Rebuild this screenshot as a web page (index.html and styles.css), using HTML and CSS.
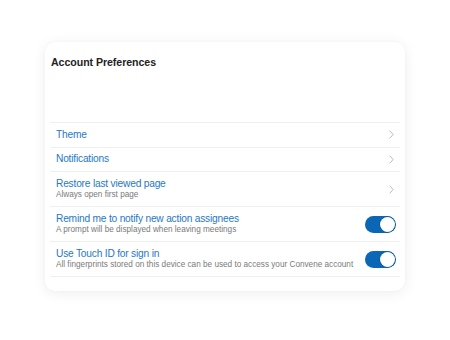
FILE: index.html
```html
<!DOCTYPE html>
<html>
<head>
<meta charset="utf-8">
<link rel="stylesheet" href="styles.css">
</head>
<body>
<div class="card">
  <div class="title">Account Preferences</div>
  <div class="list">
    <div class="row short">
      <div class="text"><div class="label">Theme</div></div>
      <svg class="chev" width="5" height="9" viewBox="0 0 5 9"><path d="M0.7 0.7 L4.2 4.5 L0.7 8.3" fill="none" stroke="#b9b9b9" stroke-width="1"/></svg>
    </div>
    <div class="row short">
      <div class="text"><div class="label">Notifications</div></div>
      <svg class="chev" width="5" height="9" viewBox="0 0 5 9"><path d="M0.7 0.7 L4.2 4.5 L0.7 8.3" fill="none" stroke="#b9b9b9" stroke-width="1"/></svg>
    </div>
    <div class="row">
      <div class="text"><div class="label">Restore last viewed page</div><div class="sub">Always open first page</div></div>
      <svg class="chev" width="5" height="9" viewBox="0 0 5 9"><path d="M0.7 0.7 L4.2 4.5 L0.7 8.3" fill="none" stroke="#b9b9b9" stroke-width="1"/></svg>
    </div>
    <div class="row">
      <div class="text"><div class="label">Remind me to notify new action assignees</div><div class="sub">A prompt will be displayed when leaving meetings</div></div>
      <div class="toggle"><div class="knob"></div></div>
    </div>
    <div class="row">
      <div class="text"><div class="label">Use Touch ID for sign in</div><div class="sub">All fingerprints stored on this device can be used to access your Convene account</div></div>
      <div class="toggle"><div class="knob"></div></div>
    </div>
  </div>
</div>
</body>
</html>
```
FILE: styles.css
```css
html, body {
  margin: 0;
  padding: 0;
  background: #ffffff;
  width: 450px;
  height: 340px;
  overflow: hidden;
  font-family: "Liberation Sans", Arial, sans-serif;
}
body {
  padding: 42px 0 0 45px;
  box-sizing: border-box;
}
.card {
  width: 360px;
  height: 249px;
  box-sizing: border-box;
  background: #fff;
  border-radius: 10px;
  box-shadow: 0 2px 14px rgba(0,0,0,0.07), 0 0 3px rgba(0,0,0,0.03);
  padding: 0 5px;
}
.title {
  height: 80px;
  box-sizing: border-box;
  padding: 14px 0 0 1px;
  font-size: 10.6px;
  font-weight: bold;
  color: #222;
  letter-spacing: -0.05px;
}
.list {
  border-top: 1.5px solid #efefef;
}
.row {
  height: 35px;
  box-sizing: border-box;
  border-bottom: 1.5px solid #efefef;
  display: flex;
  align-items: center;
  padding: 0 4px 0 6px;
}
.row.short {
  height: 24.5px;
}
.text {
  flex: 1;
  display: flex;
  flex-direction: column;
}
.label {
  font-size: 10.2px;
  color: #1f78c8;
  line-height: 12px;
  letter-spacing: -0.2px;
}
.sub {
  font-size: 8.2px;
  color: #7a7a7a;
  line-height: 10px;
}
.chev {
  margin-right: 2px;
}
.toggle {
  width: 31px;
  height: 17px;
  border-radius: 9px;
  background: #0b67b6;
  position: relative;
}
.knob {
  position: absolute;
  right: 1px;
  top: 1px;
  width: 15px;
  height: 15px;
  border-radius: 50%;
  background: #fff;
  box-shadow: 0 0 0 0.5px #0a4f8a;
}
```
